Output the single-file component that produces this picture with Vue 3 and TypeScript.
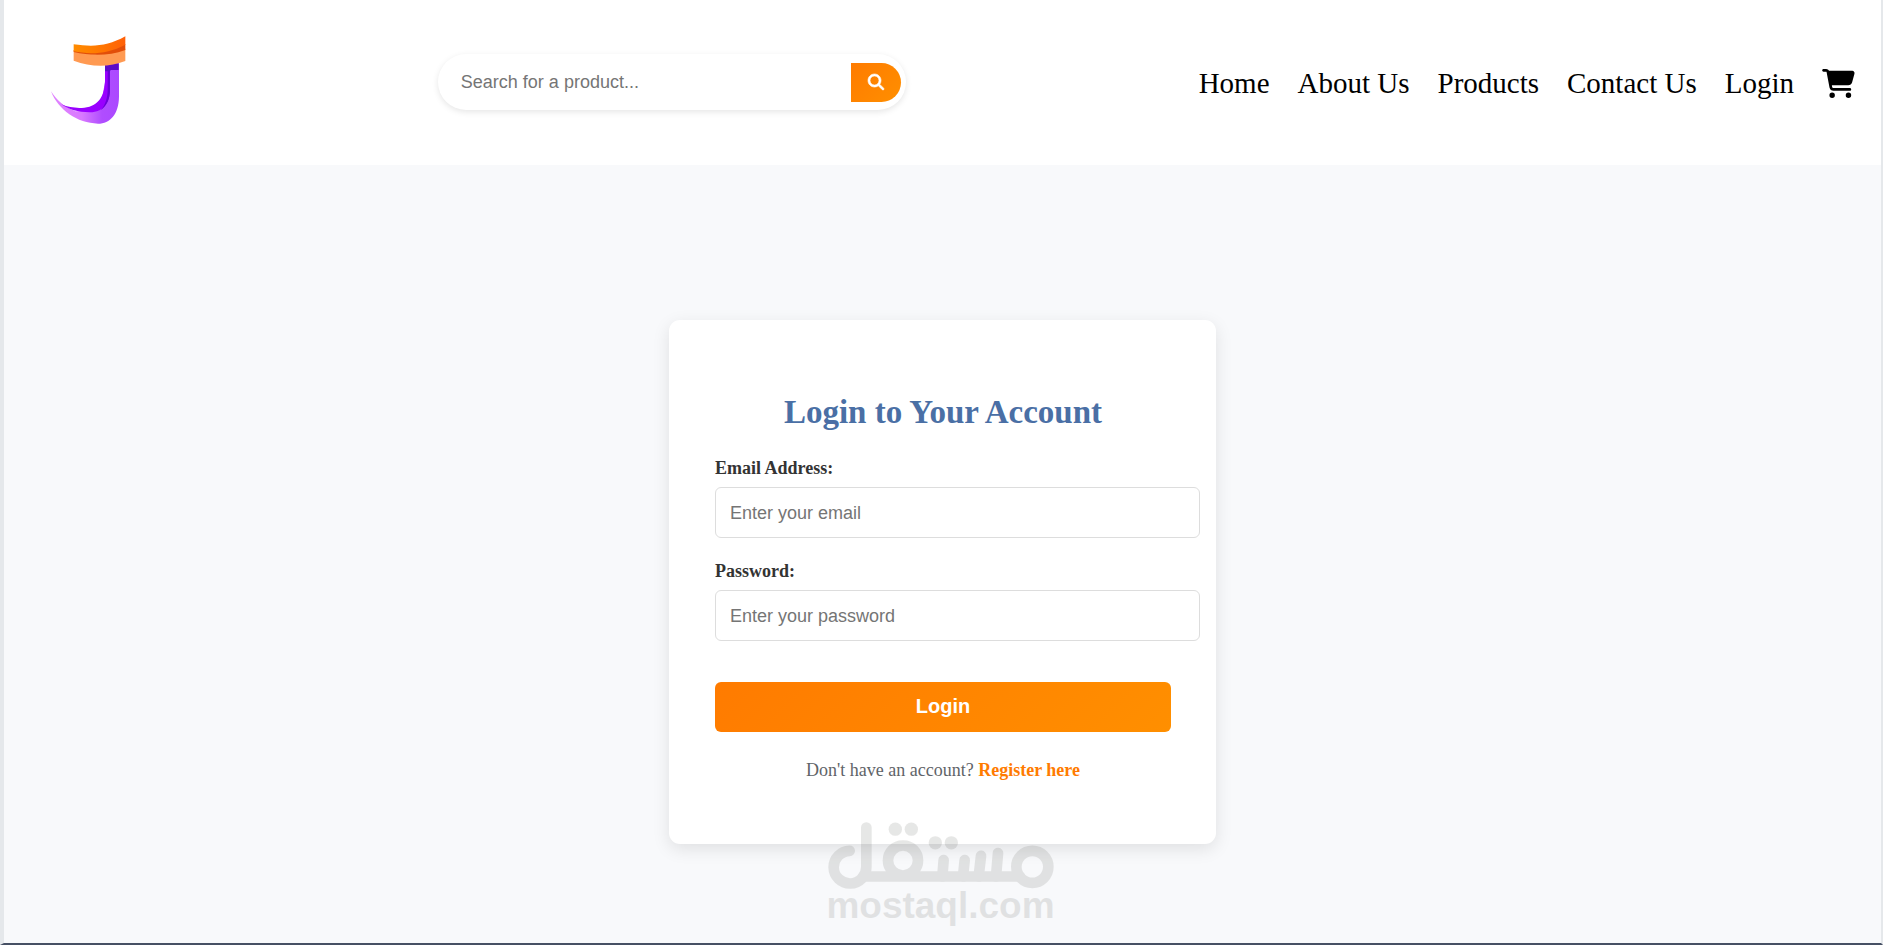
<script setup lang="ts">
import { ref } from 'vue'

interface NavItem {
  label: string
  href: string
}

const navItems: NavItem[] = [
  { label: 'Home', href: '#home' },
  { label: 'About Us', href: '#about' },
  { label: 'Products', href: '#products' },
  { label: 'Contact Us', href: '#contact' },
  { label: 'Login', href: '#login' },
]

const query = ref('')
const email = ref('')
const password = ref('')
</script>

<template>
  <div class="page">
    <header class="header">
      <a class="brand" href="#home" aria-label="Homepage">
        <svg viewBox="93 75 342 342" aria-hidden="true">
          <defs>
            <linearGradient id="capTop" x1="0" x2="1" y1="0" y2="0">
              <stop offset="0" stop-color="#ff8c00" />
              <stop offset="0.45" stop-color="#ff7a00" />
              <stop offset="1" stop-color="#ff6008" />
            </linearGradient>
            <linearGradient id="tail" x1="0" x2="1" y1="0" y2="0">
              <stop offset="0" stop-color="#e083ff" />
              <stop offset="0.45" stop-color="#d97aff" />
              <stop offset="0.75" stop-color="#b04dff" />
              <stop offset="1" stop-color="#ab49ff" />
            </linearGradient>
          </defs>
          <path fill="url(#tail)" d="M325 190H357V290C356 342 331 371 294 371C232 370 174 329 153 274C171 302 190 319 226 334L300 330Z" />
          <path fill="#9900ff" d="M315 196H330V268C330 306 312 337 270 337C234 337 205 328 184 313C207 323 231 325 253 323C298 319 315 283 315 240Z" />
          <path fill="#6a00d8" d="M323 205H330V268C330 298 320 318 302 331C317 313 323 294 323 268Z" />
          <path fill="#5b0bc8" d="M315 190H356V210H332L330 214H315Z" />
          <path fill="#ff9a52" d="M221 154C278 168 327 164 376 146V183C325 203 273 201 221 182Z" />
          <path fill="#e24e08" d="M221 150C275 160 326 154 376 132V150C326 168 273 168 221 156Z" />
          <path fill="url(#capTop)" d="M221 133C281 141 322 139 376 109V134C324 162 270 164 221 154Z" />
        </svg>
      </a>

      <form class="search" role="search" @submit.prevent>
        <input v-model="query" type="text" placeholder="Search for a product..." aria-label="Search for a product" />
        <button type="submit" aria-label="Search">
          <svg viewBox="0 0 512 512" aria-hidden="true">
            <path d="M416 208c0 45.900-14.900 88.300-40 122.700L502.600 457.400c12.500 12.500 12.500 32.800 0 45.300s-32.800 12.500-45.300 0L330.700 376c-34.400 25.200-76.800 40-122.700 40C93.100 416 0 322.900 0 208S93.100 0 208 0S416 93.100 416 208zM208 352a144 144 0 1 0 0-288 144 144 0 1 0 0 288z" />
          </svg>
        </button>
      </form>

      <nav class="nav">
        <a v-for="item in navItems" :key="item.label" :href="item.href">{{ item.label }}</a>
        <a class="cart" href="#cart" aria-label="Cart">
          <svg viewBox="0 0 576 512" aria-hidden="true">
            <path d="M0 24C0 10.700 10.700 0 24 0H69.500c22 0 41.500 12.800 50.600 32h411c26.300 0 45.500 25 38.600 50.400l-41 152.300c-8.500 31.400-37 53.300-69.500 53.300H170.700l5.400 28.500c2.200 11.300 12.100 19.500 23.600 19.500H488c13.300 0 24 10.700 24 24s-10.700 24-24 24H199.700c-34.600 0-64.300-24.600-70.700-58.500L77.400 54.500c-.7-3.800-4-6.500-7.900-6.500H24C10.700 48 0 37.300 0 24zM128 464a48 48 0 1 1 96 0 48 48 0 1 1-96 0zm336-48a48 48 0 1 1 0 96 48 48 0 1 1 0-96z" />
          </svg>
        </a>
      </nav>
    </header>

    <main class="main">
      <form class="card" @submit.prevent>
        <h1>Login to Your Account</h1>
        <div class="field">
          <label for="email">Email Address:</label>
          <input id="email" v-model="email" type="email" placeholder="Enter your email" />
        </div>
        <div class="field">
          <label for="password">Password:</label>
          <input id="password" v-model="password" type="password" placeholder="Enter your password" />
        </div>
        <button class="submit" type="submit">Login</button>
        <p class="register">Don't have an account? <a href="#register">Register here</a></p>
      </form>
    </main>

    <div class="watermark">
      <svg viewBox="84 66 678 200" role="img" aria-label="مستقل">
        <g fill="none" stroke="#2b2d24" stroke-width="32" stroke-linecap="round">
          <path d="M199 82V200A49 49 0 1 1 149 152" />
          <path d="M190 229H660" />
          <circle cx="309" cy="181" r="45" />
          <circle cx="697" cy="200" r="48" />
          <path d="M431 180L427 229M494 180L489 229M543 167L536 229M594 159L588 229" />
        </g>
        <g fill="#2b2d24">
          <circle cx="286" cy="87" r="20" />
          <circle cx="334" cy="87" r="20" />
          <circle cx="406" cy="128" r="20" />
          <circle cx="454" cy="128" r="20" />
        </g>
      </svg>
      <span>mostaql.com</span>
    </div>
  </div>
</template>

<style>
body {
  margin: 0;
}
</style>

<style scoped>
* {
  box-sizing: border-box;
}

.page {
  position: relative;
  display: flex;
  flex-direction: column;
  min-height: 100vh;
  border-left: 4px solid #e5e8eb;
  border-right: 2px solid #e5e8eb;
  border-bottom: 2px solid #465064;
  background: #f8f9fb;
  font-family: "Liberation Serif", "Times New Roman", serif;
}

.header {
  display: flex;
  align-items: center;
  justify-content: space-between;
  padding: 25px 26px 26px 27px;
  background: #ffffff;
}

.brand svg {
  display: block;
  width: 114px;
  height: 114px;
}

.search {
  display: flex;
  align-items: center;
  width: 468px;
  height: 56px;
  padding: 0 5px 0 23px;
  border-radius: 28px;
  background: #ffffff;
  box-shadow: 0 2px 6px rgba(0, 0, 0, 0.1);
}

.search input {
  flex: 1;
  min-width: 0;
  padding: 0;
  border: 0;
  outline: 0;
  background: transparent;
  font: 18px "Liberation Sans", Arial, sans-serif;
}

input::placeholder {
  color: #757575;
  opacity: 1;
}

.search button {
  display: flex;
  align-items: center;
  justify-content: center;
  width: 50px;
  height: 39px;
  padding: 0;
  border: 0;
  border-radius: 0 20px 20px 0;
  background: linear-gradient(135deg, #ff7b00, #ff8f00);
}

.search svg {
  width: 16px;
  height: 16px;
  overflow: visible;
  fill: #ffffff;
  stroke: #ffffff;
  stroke-width: 20;
}

.nav {
  display: flex;
  align-items: center;
  gap: 28px;
  padding-top: 2px;
}

.nav a {
  color: #000000;
  font-size: 29px;
  line-height: 34px;
  text-decoration: none;
}

.cart svg {
  display: block;
  width: 33px;
  height: 29px;
}

.main {
  display: flex;
  flex: 1;
  align-items: flex-start;
  justify-content: center;
  padding: 155px 20px 99px;
}

.card {
  width: 547px;
  padding: 72px 45px 63px 46px;
  border-radius: 11px;
  background: #ffffff;
  box-shadow: 0 5px 17px rgba(0, 0, 0, 0.1);
}

h1 {
  margin: 0 0 25px;
  color: #4a6fa5;
  font-size: 33px;
  line-height: 40px;
  text-align: center;
}

.field {
  margin-bottom: 22px;
}

.field label {
  display: block;
  margin-bottom: 8px;
  color: #333333;
  font-size: 18px;
  font-weight: 700;
  line-height: 22px;
}

.field input {
  display: block;
  width: calc(100% + 29px);
  height: 51px;
  padding: 2px 14px 0;
  border: 1px solid #dddddd;
  border-radius: 6px;
  outline: 0;
  background: #ffffff;
  font: 18px "Liberation Sans", Arial, sans-serif;
}

.submit {
  display: block;
  width: 100%;
  height: 50px;
  margin-top: 41px;
  padding: 0 0 2px;
  border: 0;
  border-radius: 6px;
  background: linear-gradient(135deg, #ff7b00, #ff8f00);
  color: #ffffff;
  font: 700 20px "Liberation Sans", Arial, sans-serif;
}

.register {
  margin: 27px 0 0;
  color: #5f6468;
  font-size: 18px;
  line-height: 22px;
  text-align: center;
}

.register a {
  color: #ff7b00;
  font-weight: 700;
  text-decoration: none;
}

/* Translucent site mark laid over the card's lower edge */
.watermark {
  position: absolute;
  right: 4px;
  bottom: 20px;
  left: 0;
  display: flex;
  flex-direction: column;
  align-items: center;
  opacity: 0.11;
  pointer-events: none;
}

.watermark svg {
  display: block;
  width: 226px;
  height: 67px;
}

.watermark span {
  color: #2b2d24;
  font: 700 37px/34px "Liberation Sans", Arial, sans-serif;
}
</style>
